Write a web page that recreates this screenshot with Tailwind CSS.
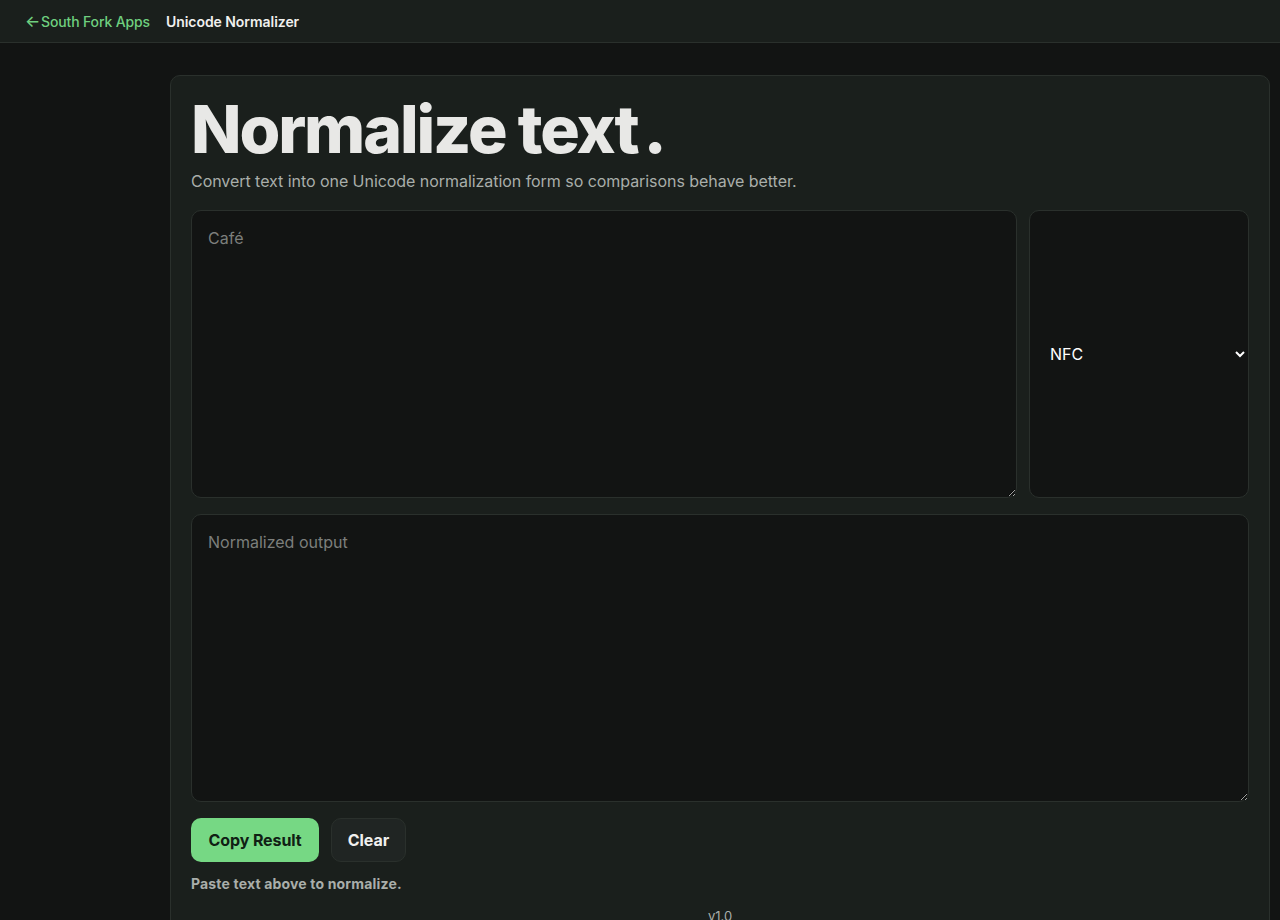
<!DOCTYPE html>
<html lang="en">
<head>
    <meta charset="UTF-8">
    <meta name="viewport" content="width=device-width, initial-scale=1.0">
    <title>Unicode Normalizer</title>
    <script src="https://cdn.jsdelivr.net/npm/@tailwindcss/browser@4"></script>
</head>
<body class="bg-[#121413] h-[920px] overflow-hidden font-['Inter',sans-serif] text-[#e8e8e6]">
    <!-- Top bar -->
    <header class="h-[43px] bg-[#1a1f1c] border-b border-[#2a302c] flex items-center gap-4 pl-[25px]">
        <a href="#" class="text-[14px] font-medium tracking-[-0.14px] text-[#6fcf7f] flex items-center gap-1">
            <span class="text-[16px] w-3 text-center">←</span>
            <span>South Fork Apps</span>
        </a>
        <span class="text-[14px] font-semibold tracking-[-0.05px] text-[#f0f0ee]">Unicode Normalizer</span>
    </header>

    <main class="ml-[170px] mt-[32px] w-[1100px] bg-[#1a1f1c] border border-[#2a302c] rounded-[10px] px-5 pb-5">
        <h1 class="text-[66px] leading-[80px] mt-[13px] font-extrabold tracking-[-2.1px] text-[#e8e8e6]">Normalize text<span class="ml-[6px]">.</span></h1>
        <p class="text-[16px] leading-6 tracking-[-0.05px] text-[#a9aeaa]">Convert text into one Unicode normalization form so comparisons behave better.</p>

        <div class="flex gap-3 mt-[17px]">
            <textarea placeholder="Café" class="flex-1 h-[288px] bg-[#121413] border border-[#2a302c] rounded-[10px] px-4 pt-[15px] pb-4 text-[16px] leading-6 text-white placeholder:text-[#7c7f7c] outline-none"></textarea>
            <select class="w-[220px] h-[288px] bg-[#121413] border border-[#2a302c] rounded-[10px] px-4 text-[16px] text-white outline-none appearance-auto">
                <option>NFC</option>
                <option>NFD</option>
                <option>NFKC</option>
                <option>NFKD</option>
            </select>
        </div>

        <textarea placeholder="Normalized output" class="block w-full h-[288px] mt-4 bg-[#121413] border border-[#2a302c] rounded-[10px] px-4 pt-[15px] pb-4 text-[16px] leading-6 text-white placeholder:text-[#7c7f7c] outline-none"></textarea>

        <div class="flex gap-3 mt-4">
            <button class="w-[128px] h-[44px] rounded-[10px] bg-[#76d884] text-[#102014] text-[16px] font-bold tracking-[-0.1px]">Copy Result</button>
            <button class="w-[75px] h-[44px] rounded-[10px] bg-[#202523] border border-[#2a302c] text-[#f0f0ee] text-[16px] font-bold">Clear</button>
        </div>

        <p class="mt-3 text-[14px] leading-5 font-bold tracking-[0.17px] text-[#a9aeaa]">Paste text above to normalize.</p>

        <p class="mt-[12px] text-center text-[13px] leading-5 text-[#a9aeaa]">v1.0</p>
    </main>
</body>
</html>
